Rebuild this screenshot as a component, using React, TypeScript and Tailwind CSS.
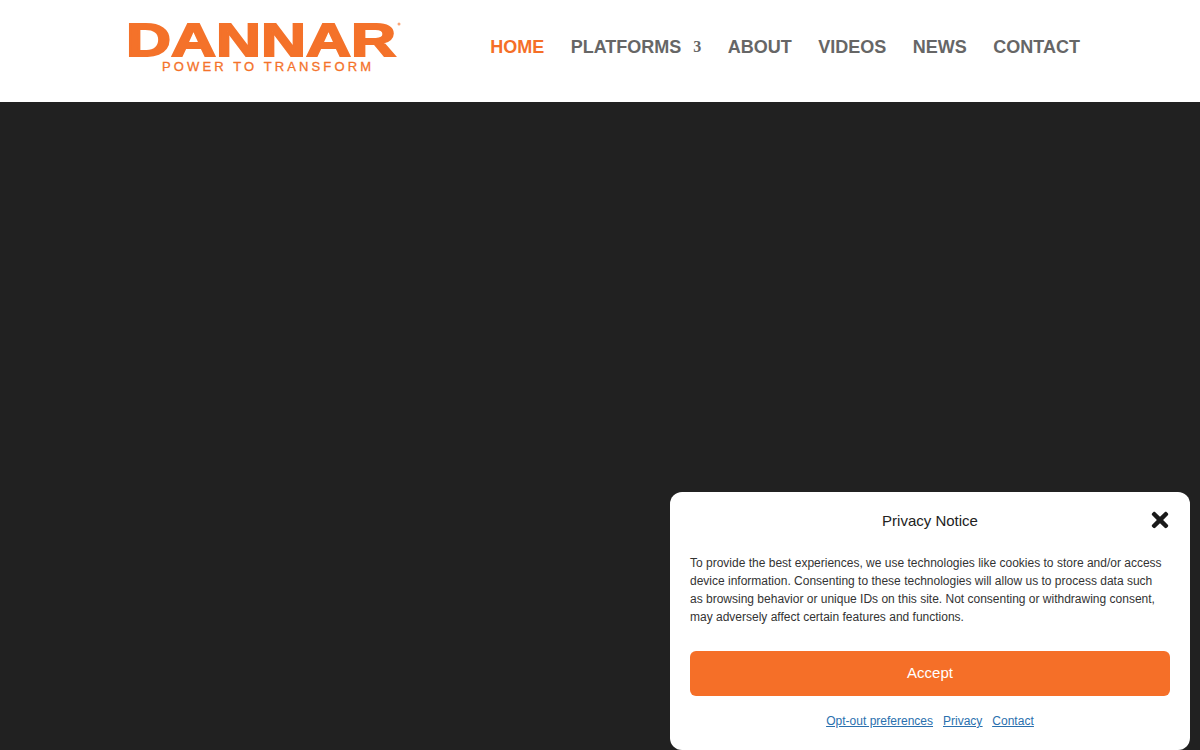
import React from 'react';
import { FaTimes } from 'react-icons/fa';

const navItems = [
  { label: 'HOME', active: true },
  { label: 'PLATFORMS', caret: true },
  { label: 'ABOUT' },
  { label: 'VIDEOS' },
  { label: 'NEWS' },
  { label: 'CONTACT' },
];

const Logo = () => (
  <svg width="285" height="80" viewBox="0 0 285 80" className="block" role="img" aria-label="Dannar">
    <text
      x="2"
      y="45"
      textLength="270"
      lengthAdjust="spacingAndGlyphs"
      fontFamily="'Liberation Sans', Arial, sans-serif"
      fontWeight="700"
      fontSize="47"
      fill="#f4722a"
      stroke="#f4722a"
      strokeWidth="1.8"
    >
      DANNAR
    </text>
    <circle cx="275" cy="13" r="1.5" fill="#f9a679" />
    <text
      x="38"
      y="60"
      textLength="209"
      fontFamily="'Liberation Sans', Arial, sans-serif"
      fontWeight="400"
      fontSize="13"
      fill="#f4722a"
      stroke="#f4722a"
      strokeWidth="0.3"
    >
      POWER TO TRANSFORM
    </text>
  </svg>
);

export default function App() {
  return (
    <div className="relative h-[750px] overflow-hidden flex flex-col font-['Liberation_Sans',Arial,sans-serif]">
      {/* Header */}
      <header className="h-[102px] bg-white flex items-center justify-between pl-[124px] pr-[120px] shrink-0">
        <Logo />
        <nav className="flex items-center gap-[26.5px] -mt-[8px]">
          {navItems.map((item) => (
            <a
              key={item.label}
              className={`flex items-center text-[18px] font-bold leading-[24px] ${item.active ? 'text-[#f56f28]' : 'text-[#666666]'}`}
            >
              {item.label}
              {item.caret && (
                <span className="ml-[12px] font-['Liberation_Serif',serif] text-[16px] font-bold">3</span>
              )}
            </a>
          ))}
        </nav>
      </header>

      <main className="flex-1 bg-[#212121]" />

      {/* Cookie notice */}
      <div className="absolute left-[670px] top-[492px] w-[520px] rounded-[12px] bg-white px-[20px] pb-[20px] text-[#222222]">
        <div className="relative h-[62px] pt-[17px] text-center text-[15px] leading-[23px]">
          Privacy Notice
          <button className="absolute -right-[2px] top-[16px] text-[#1a1a1a] leading-none">
            <FaTimes size={24} />
          </button>
        </div>
        <p className="pr-[8px] text-[12px] leading-[18px] text-[#333333]">
          To provide the best experiences, we use technologies like cookies to store and/or access device information. Consenting to these technologies will allow us to process data such as browsing behavior or unique IDs on this site. Not consenting or withdrawing consent, may adversely affect certain features and functions.
        </p>
        <button className="mt-[25px] h-[45px] w-full rounded-[6px] bg-[#f56f28] text-[15px] text-white">
          Accept
        </button>
        <div className="mt-[16px] flex justify-center gap-[10px] text-[12px] leading-[18px] text-[#2a70ae] underline">
          <a>Opt-out preferences</a>
          <a>Privacy</a>
          <a>Contact</a>
        </div>
      </div>
    </div>
  );
}
